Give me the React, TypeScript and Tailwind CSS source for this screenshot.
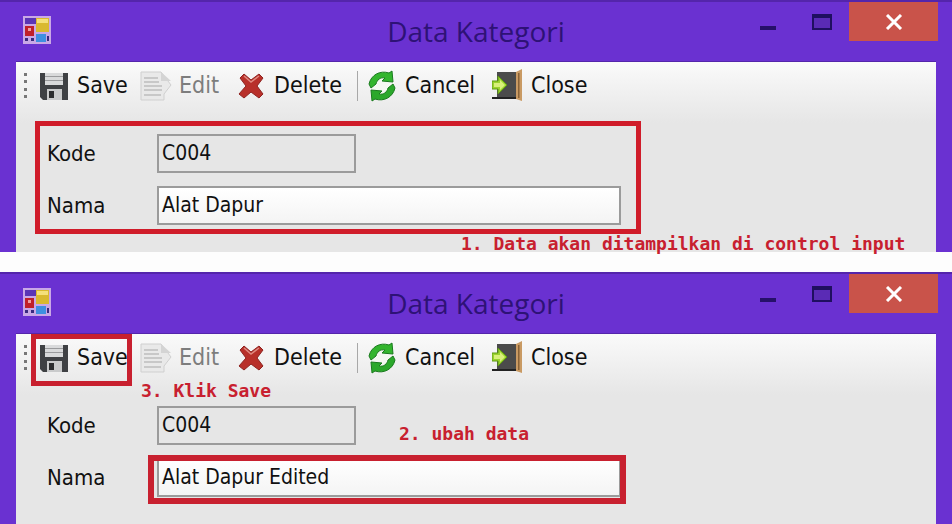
import React from "react";

const uiFont = "font-['DejaVu_Sans_Condensed','DejaVu_Sans',sans-serif]";
const noteFont = "font-['DejaVu_Sans_Mono',monospace] font-bold text-[#c8202f] text-[18px] leading-[24px]";

function AppIcon() {
  return (
    <svg width="28" height="28" viewBox="0 0 28 28" className="shrink-0">
      <rect x="0" y="0" width="28" height="28" fill="#c9a8e6" />
      <rect x="2" y="2" width="11" height="6" fill="#5a35b5" />
      <rect x="13" y="2" width="13" height="14" fill="#d9b92f" />
      <rect x="14" y="3" width="11" height="4" fill="#f4e07a" />
      <rect x="2" y="10" width="9" height="10" fill="#c0202a" />
      <rect x="5" y="12" width="3" height="3" fill="#f0a0a0" />
      <rect x="2" y="22" width="3" height="3" fill="#3a2a80" />
      <rect x="8" y="22" width="3" height="3" fill="#3a2a80" />
      <rect x="13" y="18" width="10" height="8" fill="#3f8fe0" />
      <rect x="24" y="20" width="2" height="5" fill="#3a2a80" />
    </svg>
  );
}

function SaveIcon() {
  return (
    <svg width="28" height="28" viewBox="0 0 28 28" className="shrink-0">
      <path d="M0 1h28v27H3l-3-3z" fill="#3f4144" />
      <rect x="5" y="1" width="18" height="12" fill="#d9dadb" />
      <rect x="5" y="4" width="18" height="1" fill="#9a9b9d" />
      <rect x="5" y="8" width="18" height="1" fill="#9a9b9d" />
      <rect x="7" y="17" width="15" height="11" fill="#c9cacb" />
      <rect x="9" y="19" width="5" height="7" fill="#2b2c2e" />
    </svg>
  );
}

function EditIcon() {
  return (
    <svg width="32" height="30" viewBox="0 0 32 30" className="shrink-0">
      <path d="M1 1h20l10 13-7 9v6H1z" fill="#e9e9e9" stroke="#cfcfcf" />
      <path d="M21 1v9h10z" fill="#d4d4d4" />
      <path d="M4 7h14M4 11h15M4 15h18M4 19h18M4 24h17" stroke="#bdbdbd" strokeWidth="1.5" />
    </svg>
  );
}

function DeleteIcon() {
  return (
    <svg width="26" height="26" viewBox="0 0 26 26" className="shrink-0">
      <path d="M2 5 6 1l7 6 8-6 4 4-6 8 6 8-4 4-8-6-7 6-5-4 7-8z" fill="#b8302a" stroke="#8e2320" strokeWidth="1" />
      <path d="M6 3l7 6 8-6" fill="none" stroke="#e08a80" strokeWidth="1.5" />
    </svg>
  );
}

function CancelIcon() {
  return (
    <svg width="32" height="32" viewBox="0 0 32 32" className="shrink-0">
      <circle cx="16" cy="16" r="10" fill="#f4f8f2" />
      <path d="M3 14C5 5 14 0 23 3l3-2 1 11-11-1 3-3c-5-1-8 2-9 6l-5 4z" fill="#33b52e" stroke="#1a7a1e" />
      <path d="M29 18c-2 9-11 14-20 11l-3 2-1-11 11 1-3 3c5 1 8-2 9-6l5-4z" fill="#2ba82b" stroke="#1a7a1e" />
    </svg>
  );
}

function CloseIcon() {
  return (
    <svg width="32" height="34" viewBox="0 0 32 34" className="shrink-0">
      <rect x="5" y="3" width="19" height="27" fill="#4b4b4b" />
      <path d="M24 3l6-3v32l-6-2z" fill="#c99a63" />
      <rect x="26" y="4" width="1.5" height="25" fill="#8a6236" />
      <rect x="0" y="28" width="24" height="2" fill="#222" />
      <path d="M0 12h6V7l9 9-9 9v-5H0z" fill="#9bd32d" stroke="#5f9a12" />
      <path d="M2 14h6v-3l5 5-5 5v-3H2z" fill="#d9f07a" />
    </svg>
  );
}

function ToolButton({ icon, label, className, textClass }: { icon: React.ReactNode; label: string; className: string; textClass?: string }) {
  return (
    <div className={`flex items-center ${className}`}>
      {icon}
      <span className={textClass ?? "text-[#111]"}>{label}</span>
    </div>
  );
}

function Field({ label, value, width, disabled }: { label: string; value: string; width: string; disabled?: boolean }) {
  return (
    <div className="flex items-center h-[39px]">
      <span className="w-[110px] text-[#111] text-[22px]">{label}</span>
      <div
        className={`${width} h-[39px] border-2 border-[#9b9b9b] pl-[3px] flex items-center text-[21px] text-[#111] ${
          disabled ? "bg-[#e6e6e6]" : "bg-gradient-to-b from-white to-[#f4f4f4]"
        }`}
      >
        {value}
      </div>
    </div>
  );
}

function Window({ nama, height, children }: { nama: string; height: string; children?: React.ReactNode }) {
  return (
    <div className={`relative ${height} bg-[#6a31d1] border-t-2 border-[#5425ab] overflow-hidden ${uiFont}`}>
      <div className="grid grid-cols-[1fr_auto_1fr] h-[59px]">
        <div className="pl-[23px] pt-[14px]">
          <AppIcon />
        </div>
        <div className="text-[28px] leading-[58px] text-[#2e1276] font-['Open_Sans',sans-serif]">Data Kategori</div>
        <div className="flex justify-end items-start pr-[14px]">
          <div className="w-[16px] h-[4px] bg-[#26106a] mt-[24px]" />
          <div className="w-[20px] h-[16px] border-2 border-t-[4px] border-[#1f0f60] bg-[#5a2bb5] mt-[12px] ml-[36px]" />
          <div className="w-[89px] h-[39px] bg-[#c9534a] ml-[17px] flex items-center justify-center">
            <svg width="18" height="16" viewBox="0 0 18 16">
              <path d="M2 1l14 14M16 1 2 15" stroke="#fff" strokeWidth="3" />
            </svg>
          </div>
        </div>
      </div>
      <div className="mx-4 h-full bg-[#e6e6e6] border-t border-[#5425ab]">
        <div className="h-[61px] bg-gradient-to-b from-[#fafafa] to-[#e6e6e6] flex items-center pb-[14px] pl-[8px] text-[23px]">
          <div className="w-[3px] h-[26px] mr-[13px] flex flex-col justify-between">
            <span className="w-[3px] h-[3px] bg-[#777]" />
            <span className="w-[3px] h-[3px] bg-[#777]" />
            <span className="w-[3px] h-[3px] bg-[#777]" />
            <span className="w-[3px] h-[3px] bg-[#777]" />
          </div>
          <ToolButton icon={<SaveIcon />} label="Save" className="w-[100px] gap-[9px]" />
          <ToolButton icon={<EditIcon />} label="Edit" className="w-[98px] gap-[7px]" textClass="text-[#7d7d7d]" />
          <ToolButton icon={<DeleteIcon />} label="Delete" className="w-[119px] gap-[10px]" />
          <div className="w-px h-[30px] bg-[#a8a8a8] mr-[8px]" />
          <ToolButton icon={<CancelIcon />} label="Cancel" className="w-[126px] gap-[7px]" />
          <ToolButton icon={<CloseIcon />} label="Close" className="gap-[7px]" />
        </div>
        <div className="pl-[31px] pt-[11px] flex flex-col gap-[13px]">
          <Field label="Kode" value="C004" width="w-[199px]" disabled />
          <Field label="Nama" value={nama} width="w-[464px]" />
        </div>
      </div>
      {children}
    </div>
  );
}

export default function App() {
  return (
    <div className="w-[952px] h-[524px] bg-white relative overflow-hidden">
      <Window nama="Alat Dapur" height="h-[252px]" />
      <div className="h-[20px] bg-[#fdfdfd]" />
      <Window nama="Alat Dapur Edited" height="h-[252px]">
        <div className="absolute left-[31px] top-[60px] w-[101px] h-[52px] border-[5px] border-[#c8202f]" />
        <div className="absolute left-[148px] top-[181px] w-[478px] h-[49px] border-[6px] border-[#c8202f]" />
        <div className={`absolute left-[141px] top-[105px] ${noteFont}`}>3. Klik Save</div>
        <div className={`absolute left-[399px] top-[148px] ${noteFont}`}>2. ubah data</div>
      </Window>
      <div className="absolute left-[35px] top-[121px] w-[606px] h-[113px] border-[5px] border-[#d01c2a]" />
      <div className={`absolute left-[461px] top-[232px] ${noteFont}`}>1. Data akan ditampilkan di control input</div>
    </div>
  );
}
